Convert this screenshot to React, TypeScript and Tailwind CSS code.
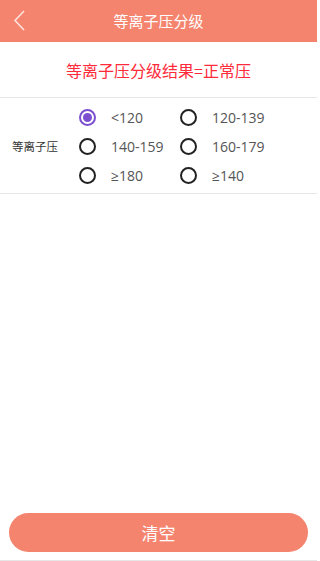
const options = [
  ['<120', '120-139'],
  ['140-159', '160-179'],
  ['≥180', '≥140'],
]

function Radio({ checked }: { checked?: boolean }) {
  return checked ? (
    <span className="w-[17px] h-[17px] rounded-full border-2 border-[#7b4fd0] flex items-center justify-center">
      <span className="w-[9px] h-[9px] rounded-full bg-[#7b4fd0]" />
    </span>
  ) : (
    <span className="w-[17px] h-[17px] rounded-full border-2 border-[#222]" />
  )
}

export default function App() {
  return (
    <div className="w-[317px] h-[561px] bg-white flex flex-col font-['Noto_Sans_CJK_SC',sans-serif]">
      {/* 标题栏 */}
      <div className="h-[42px] bg-[#f5846f] flex items-center justify-center relative shrink-0">
        <svg className="absolute left-[13px] top-[10px]" width="13" height="21" viewBox="0 0 13 21">
          <path d="M11 1 L2 10.5 L11 20" fill="none" stroke="#fde5df" strokeWidth="1.5" />
        </svg>
        <span className="text-white text-[15px]">等离子压分级</span>
      </div>

      {/* 结果 */}
      <div className="h-[56px] flex items-center justify-center border-b border-[#e6e6e6] shrink-0">
        <span className="text-[#ff2a3a] text-[16px]">等离子压分级结果=正常压</span>
      </div>

      {/* 选项 */}
      <div className="flex items-center border-b border-[#e6e6e6] h-[96px] pt-[2px] shrink-0">
        <div className="w-[79px] pl-[12px] text-[11.5px] text-[#333]">等离子压</div>
        <div className="grid grid-cols-[101px_100px] gap-y-[12px]">
          {options.flat().map((o, i) => (
            <div key={o} className="flex items-center h-[17px]">
              <Radio checked={i === 0} />
              <span className="ml-[15px] text-[14px] text-[#555] font-['Open_Sans',sans-serif]">{o}</span>
            </div>
          ))}
        </div>
      </div>

      <div className="flex-1" />

      {/* 清空 */}
      <div className="px-[9px] pb-[8px]">
        <button className="w-full h-[39px] rounded-full bg-[#f5846f] text-white text-[17px]">清空</button>
      </div>
      <div className="h-[1px] bg-[#e6e6e6]" />
    </div>
  )
}
